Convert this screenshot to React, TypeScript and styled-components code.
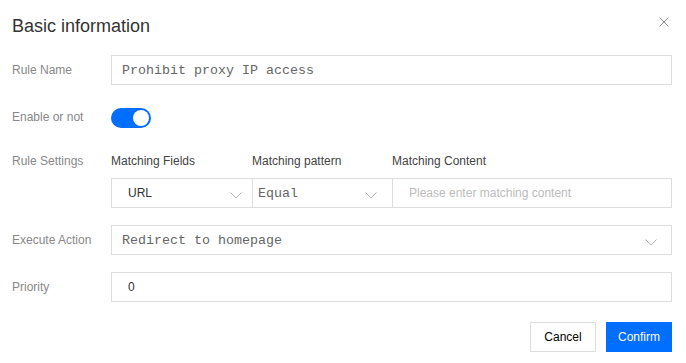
import React, { useState } from "react"
import styled, { createGlobalStyle } from "styled-components"

const GlobalStyle = createGlobalStyle`
  html, body {
    margin: 0;
    padding: 0;
    background: #fff;
  }
  body {
    font-family: "Liberation Sans", Arial, sans-serif;
    font-size: 12px;
    color: #333;
  }
`

const Dialog = styled.div`
  width: 686px;
  height: 363px;
  box-sizing: border-box;
  padding: 0 14px 0 12px;
  background: #fff;
`

const Header = styled.div`
  display: flex;
  justify-content: space-between;
  align-items: flex-start;
  padding-top: 13px;
  margin-bottom: 16px;
`

const Title = styled.h2`
  margin: 0;
  font-size: 18px;
  line-height: 26px;
  font-weight: normal;
  color: #333;
`

const CloseButton = styled.button`
  margin: 4px 3px 0 0;
  padding: 0;
  width: 10px;
  height: 10px;
  border: none;
  background: none;
  cursor: pointer;
  display: flex;
`

const Row = styled.div<{ $align?: string }>`
  display: flex;
  align-items: ${p => p.$align || "center"};
  margin-bottom: 17px;
`

const Label = styled.div<{ $lh?: number }>`
  width: 99px;
  flex-shrink: 0;
  color: #888;
  font-size: 12px;
  line-height: ${p => p.$lh || 30}px;
`

const Control = styled.div`
  flex: 1;
  min-width: 0;
`

const monoFont = `"Liberation Mono", "DejaVu Sans Mono", monospace`
const sansFont = `"Liberation Sans", Arial, sans-serif`

const TextInput = styled.input<{ $mono?: boolean }>`
  display: block;
  width: 100%;
  height: 30px;
  box-sizing: border-box;
  border: 1px solid #dddddd;
  outline: none;
  padding: 0 ${p => (p.$mono ? "10px" : "16px")};
  font-family: ${p => (p.$mono ? monoFont : sansFont)};
  font-size: ${p => (p.$mono ? "13.33px" : "12px")};
  color: ${p => (p.$mono ? "#666" : "#333")};
  background: #fff;

  &::placeholder {
    color: #bbb;
  }
`

const Switch = styled.button<{ $on: boolean }>`
  position: relative;
  display: block;
  margin-top: 2px;
  width: 40px;
  height: 20px;
  border-radius: 10px;
  border: none;
  padding: 0;
  cursor: pointer;
  background: ${p => (p.$on ? "#006eff" : "#ccc")};

  &::after {
    content: "";
    position: absolute;
    top: 2px;
    left: ${p => (p.$on ? "22px" : "2px")};
    width: 16px;
    height: 16px;
    border-radius: 50%;
    background: #fff;
  }
`

const Settings = styled.div`
  flex: 1;
  display: flex;
  flex-direction: column;
  gap: 5px;
`

const Cells = styled.div`
  display: flex;
`

const Cell = styled.div<{ $width?: number }>`
  ${p => (p.$width ? `width: ${p.$width}px; flex-shrink: 0;` : "flex: 1; min-width: 0;")}
  & + & {
    margin-left: -1px;
  }
`

const SubLabel = styled.div`
  color: #444;
  font-size: 12px;
  line-height: 24px;
`

const SelectBox = styled.div<{ $mono?: boolean; $left?: number; $right?: number }>`
  display: flex;
  align-items: center;
  justify-content: space-between;
  height: 30px;
  box-sizing: border-box;
  border: 1px solid #dddddd;
  background: #fff;
  padding: 0 ${p => p.$right ?? 14}px 0 ${p => p.$left ?? 16}px;
  font-family: ${p => (p.$mono ? monoFont : sansFont)};
  font-size: ${p => (p.$mono ? "13.33px" : "12px")};
  color: ${p => (p.$mono ? "#666" : "#333")};
  cursor: pointer;
`

const ChevronWrap = styled.span`
  display: flex;
  margin-top: 4px;
`

const Footer = styled.div`
  display: flex;
  justify-content: flex-end;
  gap: 10px;
  margin-top: 20px;
`

const Button = styled.button<{ $primary?: boolean }>`
  width: 66px;
  height: 30px;
  box-sizing: border-box;
  font-family: ${sansFont};
  font-size: 12px;
  cursor: pointer;
  border: 1px solid ${p => (p.$primary ? "#006eff" : "#dddddd")};
  background: ${p => (p.$primary ? "#006eff" : "#fff")};
  color: ${p => (p.$primary ? "#fff" : "#000")};
`

const Chevron = () => (
  <ChevronWrap>
    <svg width="12" height="7" viewBox="0 0 12 7" fill="none">
      <polyline points="0.5,0.5 6,6 11.5,0.5" stroke="#b5b5b5" strokeWidth="1" />
    </svg>
  </ChevronWrap>
)

const Select: React.FC<{ value: string; mono?: boolean; left?: number; right?: number }> = ({
  value,
  mono,
  left,
  right,
}) => (
  <SelectBox $mono={mono} $left={left} $right={right}>
    <span>{value}</span>
    <Chevron />
  </SelectBox>
)

const App: React.FC = () => {
  const [enabled, setEnabled] = useState(true)

  return (
    <Dialog>
      <GlobalStyle />
      <Header>
        <Title>Basic information</Title>
        <CloseButton aria-label="close">
          <svg width="10" height="10" viewBox="0 0 10 10">
            <path d="M0.5 0.5 L9.5 9.5 M9.5 0.5 L0.5 9.5" stroke="#888" strokeWidth="1" />
          </svg>
        </CloseButton>
      </Header>

      <Row>
        <Label>Rule Name</Label>
        <Control>
          <TextInput $mono defaultValue="Prohibit proxy IP access" />
        </Control>
      </Row>

      <Row>
        <Label>Enable or not</Label>
        <Control>
          <Switch $on={enabled} onClick={() => setEnabled(!enabled)} />
        </Control>
      </Row>

      <Row $align="flex-start">
        <Label $lh={24}>Rule Settings</Label>
        <Settings>
          <Cells>
            <Cell $width={142}>
              <SubLabel>Matching Fields</SubLabel>
            </Cell>
            <Cell $width={141}>
              <SubLabel>Matching pattern</SubLabel>
            </Cell>
            <Cell>
              <SubLabel>Matching Content</SubLabel>
            </Cell>
          </Cells>
          <Cells>
            <Cell $width={142}>
              <Select value="URL" left={16} right={10} />
            </Cell>
            <Cell $width={141}>
              <Select value="Equal" mono left={5} right={15} />
            </Cell>
            <Cell>
              <TextInput placeholder="Please enter matching content" />
            </Cell>
          </Cells>
        </Settings>
      </Row>

      <Row>
        <Label>Execute Action</Label>
        <Control>
          <Select value="Redirect to homepage" mono left={10} right={14} />
        </Control>
      </Row>

      <Row>
        <Label>Priority</Label>
        <Control>
          <TextInput defaultValue="0" />
        </Control>
      </Row>

      <Footer>
        <Button>Cancel</Button>
        <Button $primary>Confirm</Button>
      </Footer>
    </Dialog>
  )
}

export default App
